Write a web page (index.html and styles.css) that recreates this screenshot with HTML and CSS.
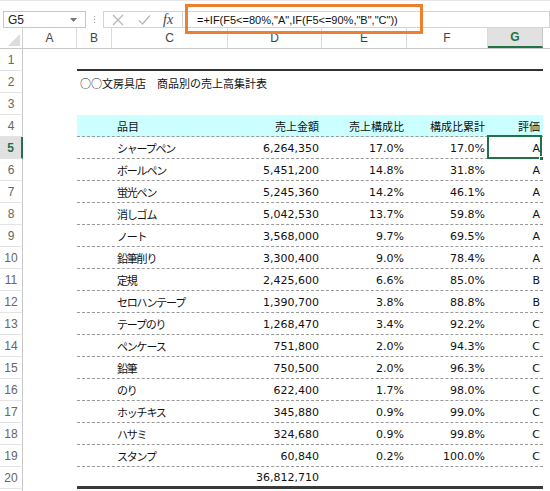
FILE: index.html
```html
<!DOCTYPE html>
<html lang="ja">
<head>
<meta charset="utf-8">
<title>売上高集計表</title>
<link rel="stylesheet" href="styles.css">
</head>
<body>
<div class="app">
  <div class="fbar">
    <div class="namebox">
      <span class="nb-text">G5</span>
      <svg class="caret" width="7" height="4" viewBox="0 0 7 4"><path d="M0 0H7L3.5 4Z" fill="#777"/></svg>
    </div>
    <div class="dots"><i></i><i></i><i></i></div>
    <div class="btns">
      <svg width="12" height="12" viewBox="0 0 12 12"><path d="M1 1L11 11M11 1L1 11" stroke="#b8b8b8" stroke-width="1.3" fill="none"/></svg>
      <svg width="13" height="12" viewBox="0 0 13 12"><path d="M1 6.5L4.5 10L12 1.5" stroke="#b8b8b8" stroke-width="1.4" fill="none"/></svg>
      <span class="fx">fx</span>
    </div>
    <div class="formula">
      <span class="ftext">=+IF(F5&lt;=80%,"A",IF(F5&lt;=90%,"B","C"))</span>
      <div class="hilite"></div>
    </div>
  </div>

  <div class="sheet">
    <div class="row hdr">
      <div class="corner"><svg width="12" height="12" viewBox="0 0 12 12"><path d="M12 0V12H0Z" fill="#dcdcdc"/></svg></div>
      <div class="ch">A</div>
      <div class="chseg">
        <div class="ch">B</div><div class="ch">C</div><div class="ch">D</div><div class="ch">E</div><div class="ch">F</div><div class="ch sel">G</div>
      </div>
      <div class="ch last"></div>
    </div>

    <div class="row"><div class="rh">1</div><div></div><div class="seg topline"></div><div></div></div>
    <div class="row"><div class="rh">2</div><div></div><div class="seg"><div class="c title">○○文房具店　商品別の売上高集計表</div></div><div></div></div>
    <div class="row"><div class="rh">3</div><div></div><div class="seg"></div><div></div></div>
    <div class="row"><div class="rh">4</div><div></div>
      <div class="seg dash cyan">
        <div class="c"></div><div class="c hname">品目</div><div class="c r">売上金額</div><div class="c r">売上構成比</div><div class="c r">構成比累計</div><div class="c r">評価</div>
      </div><div></div></div>
    <div class="row"><div class="rh cur">5</div><div></div>
      <div class="seg dash">
        <div class="c"></div><div class="c name">シャープペン</div><div class="c r">6,264,350</div><div class="c r">17.0%</div><div class="c r">17.0%</div><div class="c r selcell">A<span class="selbox"></span><span class="handle"></span></div>
      </div><div></div></div>
    <div class="row"><div class="rh">6</div><div></div>
      <div class="seg dash"><div class="c"></div><div class="c name">ボールペン</div><div class="c r">5,451,200</div><div class="c r">14.8%</div><div class="c r">31.8%</div><div class="c r">A</div></div><div></div></div>
    <div class="row"><div class="rh">7</div><div></div>
      <div class="seg dash"><div class="c"></div><div class="c name">蛍光ペン</div><div class="c r">5,245,360</div><div class="c r">14.2%</div><div class="c r">46.1%</div><div class="c r">A</div></div><div></div></div>
    <div class="row"><div class="rh">8</div><div></div>
      <div class="seg dash"><div class="c"></div><div class="c name">消しゴム</div><div class="c r">5,042,530</div><div class="c r">13.7%</div><div class="c r">59.8%</div><div class="c r">A</div></div><div></div></div>
    <div class="row"><div class="rh">9</div><div></div>
      <div class="seg dash"><div class="c"></div><div class="c name">ノート</div><div class="c r">3,568,000</div><div class="c r">9.7%</div><div class="c r">69.5%</div><div class="c r">A</div></div><div></div></div>
    <div class="row"><div class="rh">10</div><div></div>
      <div class="seg dash"><div class="c"></div><div class="c name">鉛筆削り</div><div class="c r">3,300,400</div><div class="c r">9.0%</div><div class="c r">78.4%</div><div class="c r">A</div></div><div></div></div>
    <div class="row"><div class="rh">11</div><div></div>
      <div class="seg dash"><div class="c"></div><div class="c name">定規</div><div class="c r">2,425,600</div><div class="c r">6.6%</div><div class="c r">85.0%</div><div class="c r">B</div></div><div></div></div>
    <div class="row"><div class="rh">12</div><div></div>
      <div class="seg dash"><div class="c"></div><div class="c name">セロハンテープ</div><div class="c r">1,390,700</div><div class="c r">3.8%</div><div class="c r">88.8%</div><div class="c r">B</div></div><div></div></div>
    <div class="row"><div class="rh">13</div><div></div>
      <div class="seg dash"><div class="c"></div><div class="c name">テープのり</div><div class="c r">1,268,470</div><div class="c r">3.4%</div><div class="c r">92.2%</div><div class="c r">C</div></div><div></div></div>
    <div class="row"><div class="rh">14</div><div></div>
      <div class="seg dash"><div class="c"></div><div class="c name">ペンケース</div><div class="c r">751,800</div><div class="c r">2.0%</div><div class="c r">94.3%</div><div class="c r">C</div></div><div></div></div>
    <div class="row"><div class="rh">15</div><div></div>
      <div class="seg dash"><div class="c"></div><div class="c name">鉛筆</div><div class="c r">750,500</div><div class="c r">2.0%</div><div class="c r">96.3%</div><div class="c r">C</div></div><div></div></div>
    <div class="row"><div class="rh">16</div><div></div>
      <div class="seg dash"><div class="c"></div><div class="c name">のり</div><div class="c r">622,400</div><div class="c r">1.7%</div><div class="c r">98.0%</div><div class="c r">C</div></div><div></div></div>
    <div class="row"><div class="rh">17</div><div></div>
      <div class="seg dash"><div class="c"></div><div class="c name">ホッチキス</div><div class="c r">345,880</div><div class="c r">0.9%</div><div class="c r">99.0%</div><div class="c r">C</div></div><div></div></div>
    <div class="row"><div class="rh">18</div><div></div>
      <div class="seg dash"><div class="c"></div><div class="c name">ハサミ</div><div class="c r">324,680</div><div class="c r">0.9%</div><div class="c r">99.8%</div><div class="c r">C</div></div><div></div></div>
    <div class="row"><div class="rh">19</div><div></div>
      <div class="seg dash"><div class="c"></div><div class="c name">スタンプ</div><div class="c r">60,840</div><div class="c r">0.2%</div><div class="c r">100.0%</div><div class="c r">C</div></div><div></div></div>
    <div class="row"><div class="rh">20</div><div></div>
      <div class="seg bottomline"><div class="c"></div><div class="c name"></div><div class="c r">36,812,710</div><div class="c r"></div><div class="c r"></div><div class="c r"></div></div><div></div></div>
    <div class="row"><div class="rh"></div><div></div><div class="seg"></div><div></div></div>
  </div>
</div>
</body>
</html>
```

FILE: styles.css
```css
* { box-sizing: border-box; }
html, body {
  margin: 0;
  padding: 0;
  background: #ffffff;
  overflow: hidden;
}
.app {
  width: 550px;
  height: 491px;
  overflow: hidden;
  font-family: "Liberation Sans", Arial, sans-serif;
}

/* formula bar */
.fbar {
  height: 28px;
  display: flex;
  align-items: flex-start;
  padding-top: 10px;
  background: #ffffff;
  border-top: 1px solid #e6e6e6;
}
.namebox {
  margin-left: 3px;
  width: 83px;
  height: 17px;
  border: 1px solid #c6c6c6;
  display: flex;
  align-items: center;
  justify-content: space-between;
  padding: 0 8px 0 4px;
  font-size: 12px;
  color: #222;
}
.dots {
  width: 17px;
  height: 17px;
  display: flex;
  flex-direction: column;
  align-items: center;
  justify-content: center;
  gap: 2px;
}
.dots i {
  display: block;
  width: 1px;
  height: 1px;
  background: #999;
}
.btns {
  width: 79px;
  height: 17px;
  border: 1px solid #d4d4d4;
  border-right: none;
  display: flex;
  align-items: center;
  padding-left: 8px;
  gap: 14px;
}
.fx {
  font-family: "Liberation Serif", "Times New Roman", serif;
  font-style: italic;
  font-size: 14px;
  color: #444;
  margin-left: -2px;
}
.formula {
  flex: 1;
  height: 17px;
  border: 1px solid #d4d4d4;
  position: relative;
  display: flex;
  align-items: center;
  padding-left: 14px;
}
.ftext {
  font-size: 11px;
  color: #111;
  white-space: nowrap;
}
.hilite {
  position: absolute;
  left: 2px;
  top: -8px;
  width: 238px;
  height: 30px;
  border: 3px solid #ee7f2e;
}

/* sheet */
.sheet {
  display: flex;
  flex-direction: column;
}
.row {
  display: grid;
  grid-template-columns: 23px 54px 466px 7px;
  height: 22px;
}
.row.hdr {
  height: 21px;
  border-bottom: 1px solid #c8c8c8;
}
.corner {
  border-right: 1px solid #d4d4d4;
  display: flex;
  align-items: flex-end;
  justify-content: flex-end;
  padding: 0 2px 2px 0;
}
.chseg {
  display: grid;
  grid-template-columns: 35px 116px 94px 85px 81px 55px;
}
.ch {
  display: flex;
  align-items: center;
  justify-content: center;
  font-size: 12px;
  color: #444;
  border-right: 1px solid #dadada;
}
.ch.sel {
  background: #e1e1e1;
  color: #217346;
  font-weight: bold;
  border-bottom: 2px solid #217346;
  border-right: 1px solid #c6c6c6;
}
.ch.last { border-right: none; }

.rh {
  display: flex;
  align-items: center;
  justify-content: center;
  font-size: 12px;
  color: #666;
  border-right: 1px solid #c8c8c8;
  border-bottom: 1px solid #e3e3e3;
}
.rh.cur {
  background: #e1e1e1;
  color: #217346;
  font-weight: bold;
  border-right: 2px solid #217346;
}

.seg {
  display: grid;
  grid-template-columns: 35px 116px 94px 85px 81px 55px;
  font-family: "DejaVu Sans", "Noto Sans CJK JP", sans-serif;
  font-size: 11px;
  color: #111;
}
.seg.topline { border-bottom: 2px solid #333; }
.seg.dash { border-bottom: 1px dashed #999999; }
.seg.cyan { background: #ccffff; }
.seg.bottomline { border-bottom: 3px solid #3a3a3a; }

.c {
  display: flex;
  align-items: center;
  padding: 1px 3px 0 3px;
  white-space: nowrap;
}
.c.r { justify-content: flex-end; }
.c.hname { padding-left: 5px; }
.c.name {
  padding-left: 5px;
  letter-spacing: -1.2px;
}
.c.title {
  grid-column: 1 / span 4;
  padding-left: 3px;
  font-family: "Noto Sans CJK JP", sans-serif;
}

.selcell {
  position: relative;
}
.selbox {
  position: absolute;
  left: -1px;
  top: -2px;
  right: 1px;
  bottom: -1px;
  border: 2px solid #217346;
}
.handle {
  position: absolute;
  right: -1px;
  bottom: -3px;
  width: 5px;
  height: 5px;
  background: #217346;
  border: 1px solid #fff;
}
```
